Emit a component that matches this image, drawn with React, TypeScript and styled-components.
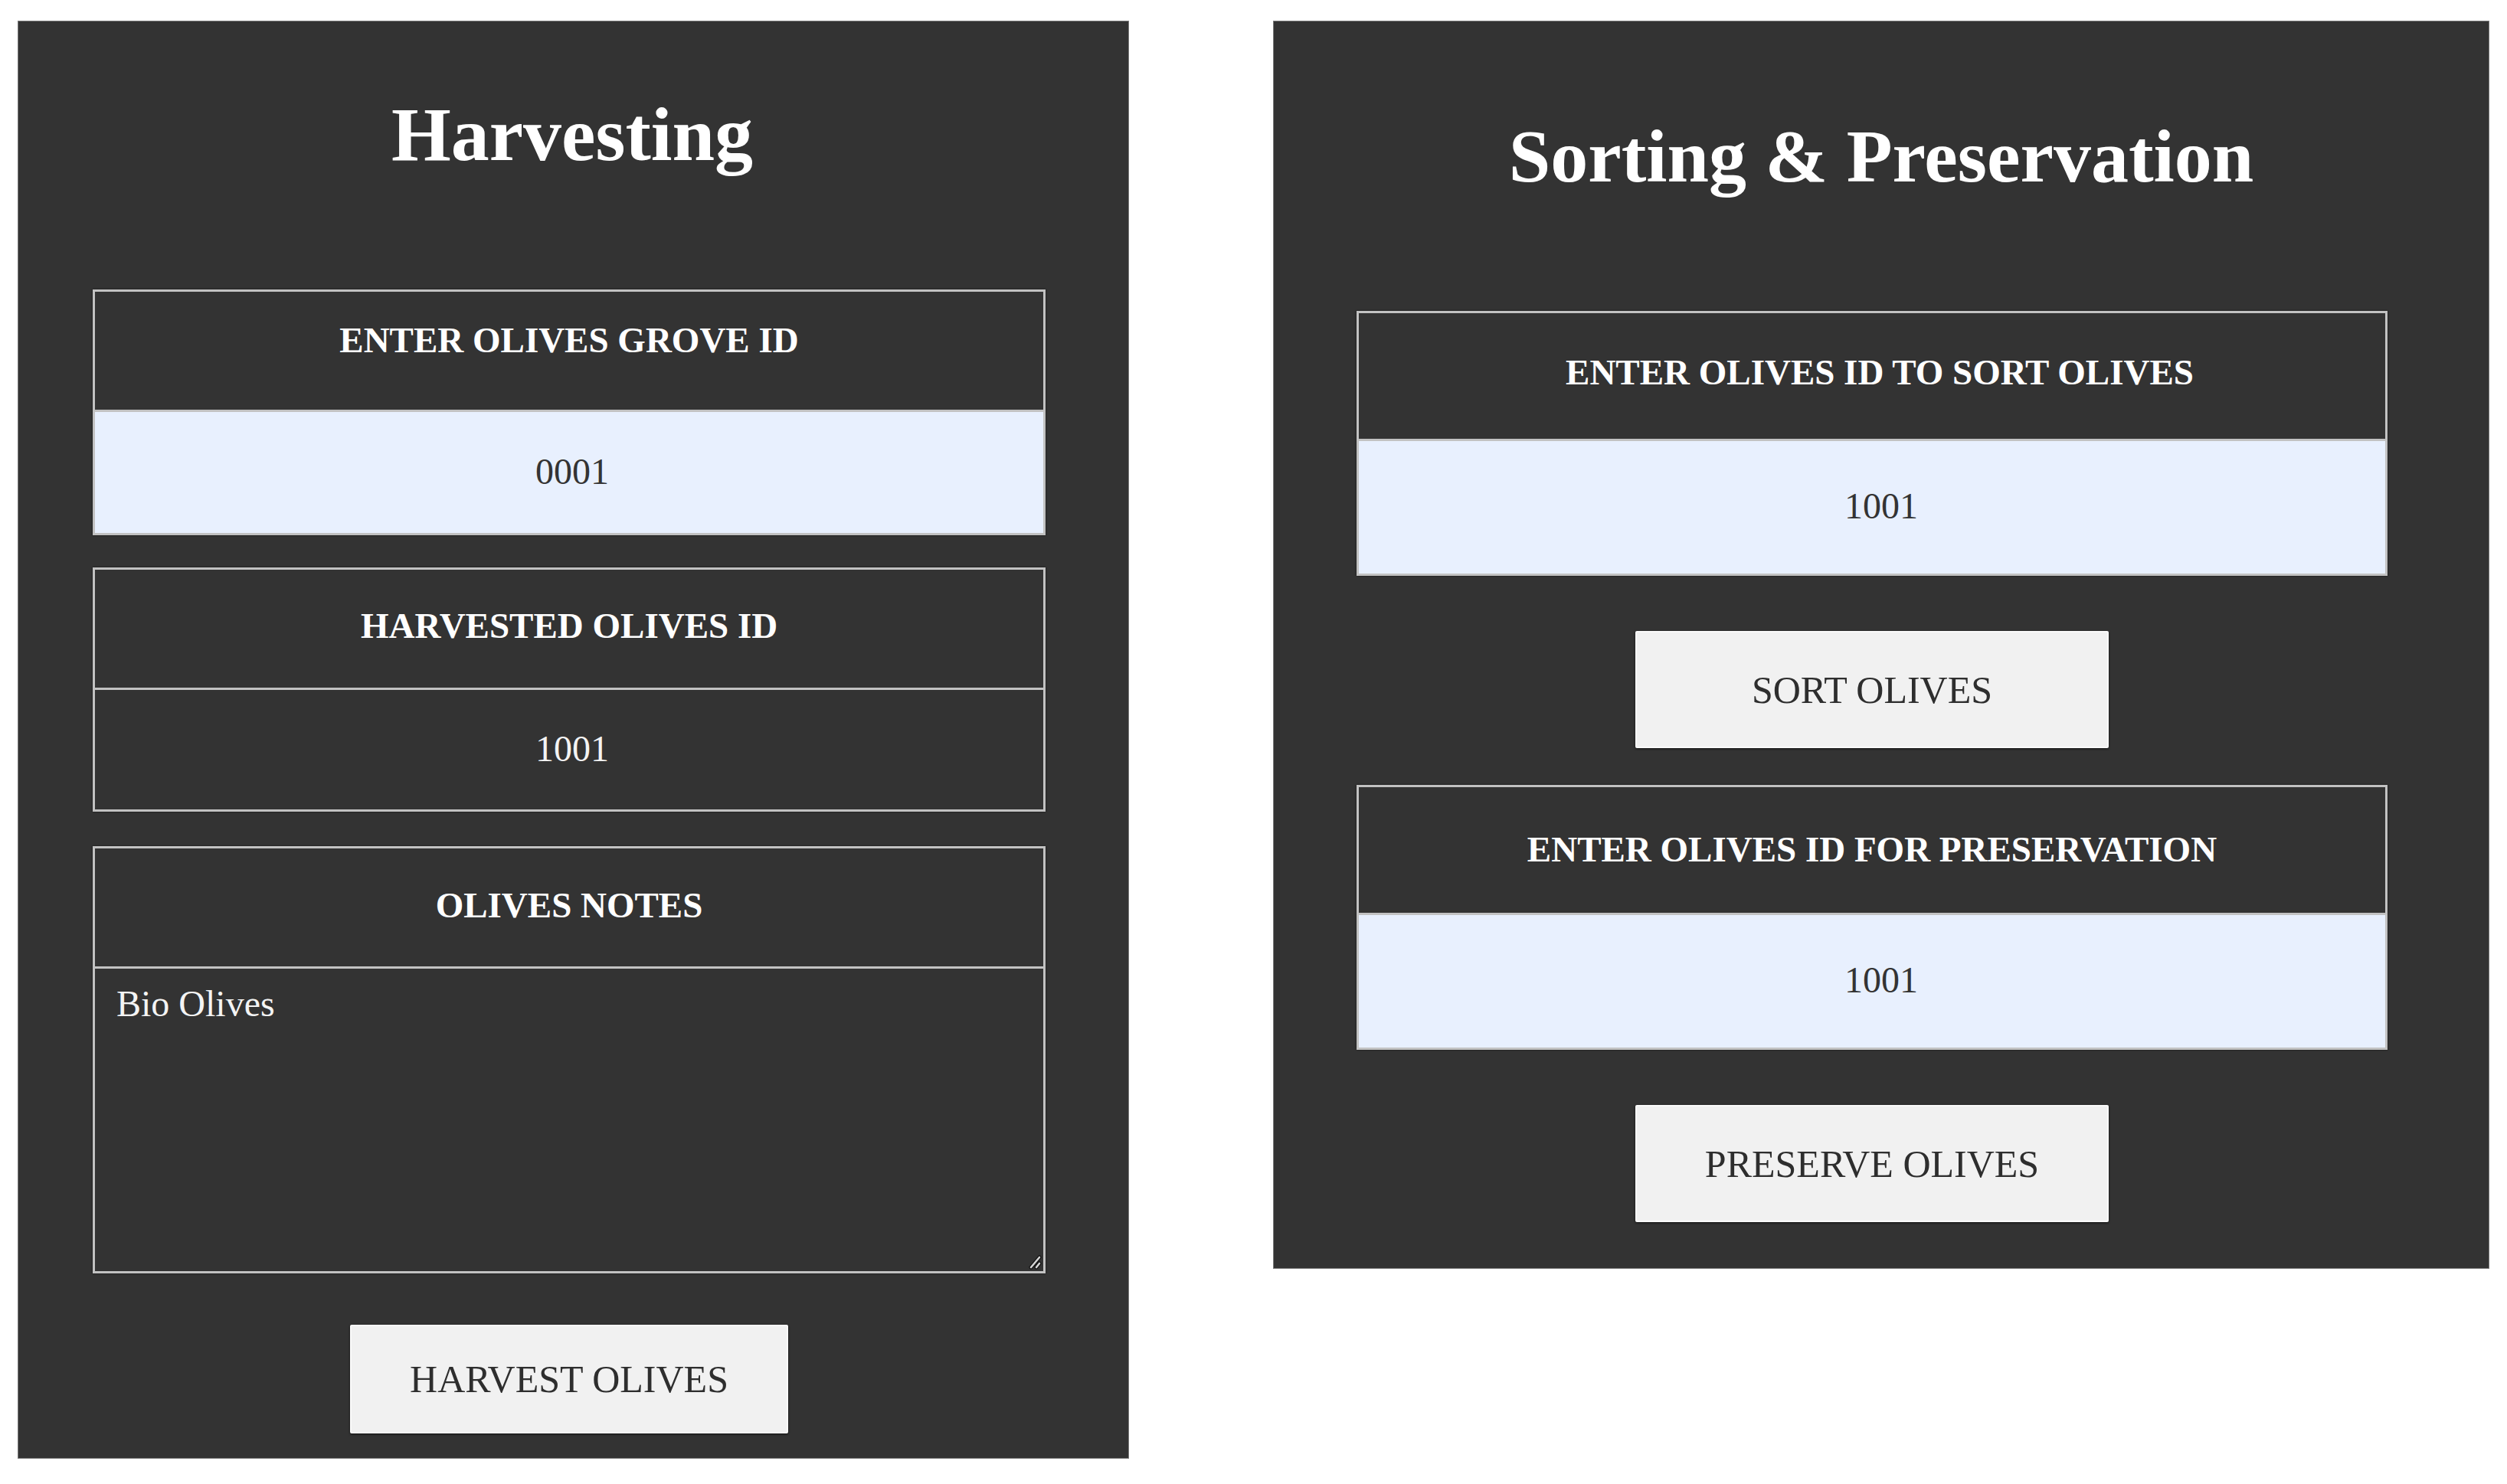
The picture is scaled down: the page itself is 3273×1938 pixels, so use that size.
import React from "react";
import styled, { createGlobalStyle } from "styled-components";

const GlobalStyle = createGlobalStyle`
  html, body {
    margin: 0;
    padding: 0;
    background: #ffffff;
  }
  body {
    font-family: "Liberation Serif", "Times New Roman", serif;
  }
  * { box-sizing: border-box; }
`;

const Page = styled.main`
  display: flex;
  align-items: flex-start;
  gap: 188px;
  padding: 27px 0 0 23px;
`;

const Panel = styled.section<{ $width: number; $pad: string }>`
  width: ${(p) => p.$width}px;
  background: #333333;
  border: 1px solid #7a7a7a;
  padding: ${(p) => p.$pad};
  display: flex;
  flex-direction: column;
  align-items: stretch;
`;

const Title = styled.h1<{ $size: number; $shift: number }>`
  margin: 0 0 152px;
  padding-left: ${(p) => p.$shift}px;
  height: 100px;
  font-family: "Liberation Serif", "Times New Roman", serif;
  font-weight: 700;
  font-size: ${(p) => p.$size}px;
  line-height: 100px;
  color: #ffffff;
  text-align: center;
  white-space: nowrap;
`;

const Field = styled.div<{ $gap?: number }>`
  border: 3px solid #c2c2c2;
  box-shadow: 0 0 2px rgba(0, 0, 0, 0.7);
  margin-bottom: ${(p) => p.$gap ?? 0}px;
  display: flex;
  flex-direction: column;
`;

const FieldLabel = styled.label<{ $height: number; $top: number; $shift?: number }>`
  display: block;
  height: ${(p) => p.$height}px;
  padding-top: ${(p) => p.$top}px;
  padding-left: ${(p) => p.$shift ?? 0}px;
  border-bottom: 3px solid #c2c2c2;
  font-family: "Liberation Serif", "Times New Roman", serif;
  font-weight: 700;
  font-size: 47px;
  line-height: 47px;
  color: #ffffff;
  text-align: center;
  white-space: nowrap;
`;

const ValueInput = styled.input<{ $height: number; $filled?: boolean; $shift: number }>`
  display: block;
  width: 100%;
  height: ${(p) => p.$height}px;
  margin: 0;
  border: none;
  outline: none;
  padding: 0 0 4px ${(p) => p.$shift}px;
  background: ${(p) => (p.$filled ? "#e8f0fe" : "#333333")};
  color: ${(p) => (p.$filled ? "#333333" : "#f4f4f4")};
  font-family: "Liberation Serif", "Times New Roman", serif;
  font-size: 48px;
  text-align: center;
`;

const NotesWrap = styled.div`
  position: relative;
`;

const NotesArea = styled.textarea`
  display: block;
  width: 100%;
  height: 395px;
  margin: 0;
  border: none;
  outline: none;
  padding: 17px 28px;
  background: #333333;
  color: #f4f4f4;
  font-family: "Liberation Serif", "Times New Roman", serif;
  font-size: 48px;
  line-height: 57px;
  resize: none;
`;

const Grip = styled.svg`
  position: absolute;
  right: 2px;
  bottom: 2px;
  width: 24px;
  height: 24px;
  pointer-events: none;
`;

const ActionButton = styled.button<{ $w: number; $h: number; $top: number; $bottom: number }>`
  align-self: center;
  width: ${(p) => p.$w}px;
  height: ${(p) => p.$h}px;
  margin: ${(p) => p.$top}px 0 ${(p) => p.$bottom}px;
  background: #f1f1f1;
  border: 2px solid #fafafa;
  border-radius: 2px;
  box-shadow: 0 1px 3px rgba(0, 0, 0, 0.7);
  color: #2e2e2e;
  font-family: "Liberation Serif", "Times New Roman", serif;
  font-size: 50px;
  cursor: pointer;
  white-space: nowrap;
`;

export default function App() {
  return (
    <>
      <GlobalStyle />
      <Page>
        <Panel $width={1451} $pad="98px 108px 32px 97px">
          <Title $size={100} $shift={8}>Harvesting</Title>

          <Field $gap={42}>
            <FieldLabel $height={157} $top={40}>ENTER OLIVES GROVE ID</FieldLabel>
            <ValueInput $height={158} $filled $shift={8} defaultValue="0001" />
          </Field>

          <Field $gap={45}>
            <FieldLabel $height={157} $top={50}>HARVESTED OLIVES ID</FieldLabel>
            <ValueInput $height={156} $shift={8} defaultValue="1001" readOnly />
          </Field>

          <Field>
            <FieldLabel $height={157} $top={51}>OLIVES NOTES</FieldLabel>
            <NotesWrap>
              <NotesArea defaultValue="Bio Olives" />
              <Grip viewBox="0 0 24 24">
                <line x1="21" y1="8" x2="10" y2="21" stroke="#111" strokeWidth="5" strokeLinecap="round" />
                <line x1="21" y1="16" x2="17" y2="21" stroke="#111" strokeWidth="5" strokeLinecap="round" />
                <line x1="21" y1="8" x2="10" y2="21" stroke="#d4d4d4" strokeWidth="2.6" strokeLinecap="round" />
                <line x1="21" y1="16" x2="17" y2="21" stroke="#d4d4d4" strokeWidth="2.6" strokeLinecap="round" />
              </Grip>
            </NotesWrap>
          </Field>

          <ActionButton $w={572} $h={142} $top={67} $bottom={0}>
            HARVEST OLIVES
          </ActionButton>
        </Panel>

        <Panel $width={1588} $pad="126px 132px 60px 108px">
          <Title $size={98} $shift={24}>Sorting &amp; Preservation</Title>

          <Field>
            <FieldLabel $height={167} $top={54} $shift={20}>ENTER OLIVES ID TO SORT OLIVES</FieldLabel>
            <ValueInput $height={173} $filled $shift={24} defaultValue="1001" />
          </Field>

          <ActionButton $w={618} $h={153} $top={72} $bottom={48}>
            SORT OLIVES
          </ActionButton>

          <Field>
            <FieldLabel $height={167} $top={58}>ENTER OLIVES ID FOR PRESERVATION</FieldLabel>
            <ValueInput $height={173} $filled $shift={24} defaultValue="1001" />
          </Field>

          <ActionButton $w={618} $h={153} $top={72} $bottom={0}>
            PRESERVE OLIVES
          </ActionButton>
        </Panel>
      </Page>
    </>
  );
}
